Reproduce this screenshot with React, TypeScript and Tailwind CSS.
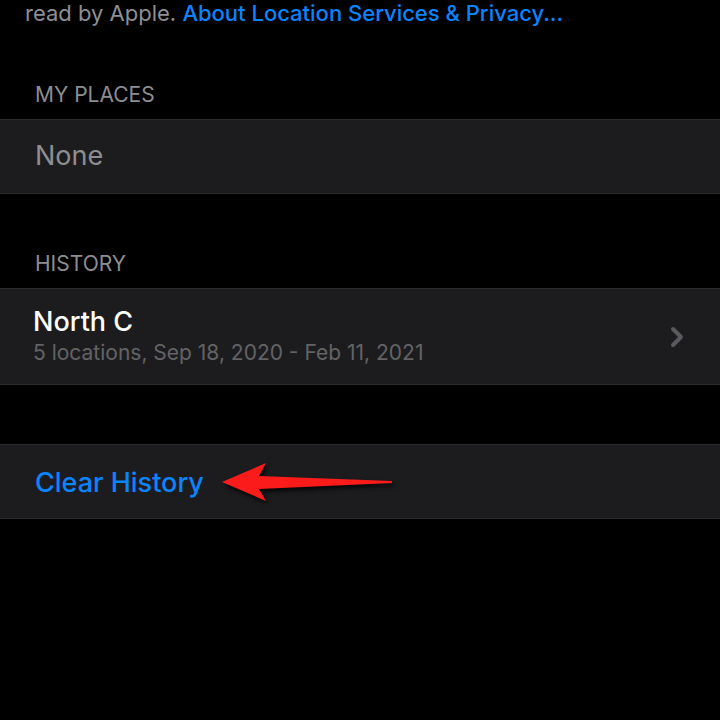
import { ChevronRight } from 'lucide-react';

const font = { fontFamily: 'Inter, "Liberation Sans", sans-serif' };

const SectionHeader = ({ label }: { label: string }) => (
  <div className="px-[35px] pb-[12px] text-[21px] leading-[25px] text-[#8d8d92]">{label}</div>
);

const Arrow = () => (
  <svg
    className="absolute left-[218px] top-[458px]"
    width="180"
    height="50"
    viewBox="218 458 180 50"
    style={{ filter: 'drop-shadow(2px 3px 2px rgba(0,0,0,0.8))' }}
  >
    <path
      d="M222 482 L266 463 L259 476 L392 481 L392 483 L259 489 L266 501 Z"
      fill="#fb1b1b"
    />
  </svg>
);

export default function App() {
  return (
    <div className="relative h-[720px] w-[720px] overflow-hidden bg-black" style={font}>
      {/* footer text of the section above */}
      <p className="px-[25px] text-[22px] leading-[26px] text-[#8e8e93]">
        read by Apple. <span className="font-medium text-[#0a84ff]">About Location Services &amp; Privacy...</span>
      </p>

      <div className="pt-[56px]">
        <SectionHeader label="MY PLACES" />
        <div className="flex h-[75px] items-center border-y border-[#2c2c2e] bg-[#1c1c1e] px-[35px]">
          <span className="text-[27px] text-[#8e8e93]">None</span>
        </div>
      </div>

      <div className="pt-[57px]">
        <SectionHeader label="HISTORY" />
        <div className="flex h-[97px] items-center border-y border-[#2c2c2e] bg-[#1c1c1e] pl-[33px] pr-[27px]">
          <div className="-mt-[2px] flex flex-1 flex-col">
            <span className="text-[27px] font-medium leading-[32px] text-white">North C</span>
            <span className="mt-[3px] text-[21px] leading-[24px] text-[#636366]">
              5 locations, Sep 18, 2020 - Feb 11, 2021
            </span>
          </div>
          <ChevronRight className="text-[#5a5a5e]" size={32} strokeWidth={3} />
        </div>
      </div>

      <div className="pt-[59px]">
        <div className="flex h-[75px] items-center border-y border-[#2c2c2e] bg-[#1c1c1e] px-[35px] pt-[3px]">
          <span className="text-[27px] font-medium text-[#0a84ff]">Clear History</span>
        </div>
      </div>

      <Arrow />
    </div>
  );
}
